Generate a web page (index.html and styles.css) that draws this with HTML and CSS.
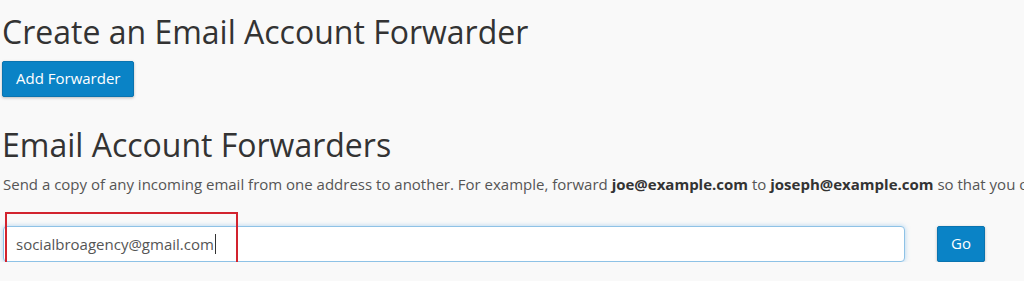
FILE: index.html
```html
<!DOCTYPE html>
<html lang="en">
<head>
  <meta charset="UTF-8" />
  <title>Email Forwarders</title>
  <link rel="stylesheet" href="styles.css">
</head>
<body>

<div class="page">
  <!-- Create section -->
  <h1 class="title">Create an Email Account Forwarder</h1>
  <a href="#" class="btn btn-primary btn-add">Add Forwarder</a>

  <!-- List section -->
  <h2 class="title title-list">Email Account Forwarders</h2>
  <p class="desc">Send a copy of any incoming email from one address to another. For example, forward <b>joe@example.com</b> to <b>joseph@example.com</b> so that you only need to check one account.</p>

  <div class="search-row">
    <div class="search-field">
      <div class="search-input"><span>socialbroagency@gmail.com</span><span class="caret"></span></div>
      <span class="highlight"></span>
    </div>
    <button class="btn btn-primary btn-go">Go</button>
  </div>
</div>

</body>
</html>
```

FILE: styles.css
```css
* {
  margin: 0;
  padding: 0;
  box-sizing: border-box;
}

body {
  font-family: "Open Sans", Arial, sans-serif;
  background-color: #f9f9f9;
  color: #333;
  overflow: hidden;
}

.page {
  padding: 0 0 0 2px;
  width: 1024px;
}

.title {
  font-weight: 400;
  font-size: 32px;
  line-height: 38px;
  color: #333;
  padding-top: 13px;
}

.btn {
  display: inline-block;
  font-family: "Open Sans", Arial, sans-serif;
  font-size: 15px;
  line-height: 21px;
  text-decoration: none;
  border-radius: 2px;
  border: 1px solid #0a74b0;
  cursor: pointer;
}

.btn-primary {
  background-color: #0a83c6;
  color: #fff;
  box-shadow: 0 1px 3px rgba(0,0,0,0.25);
}

.btn-add {
  margin-top: 10px;
  padding: 6px 13px 7px;
}

.title-list {
  padding-top: 29px;
}

.desc {
  font-size: 15px;
  line-height: 20px;
  color: #555;
  white-space: nowrap;
  overflow: hidden;
  margin-top: 10px;
  margin-left: 1px;
}

.desc b {
  color: #333;
}

.search-row {
  display: flex;
  align-items: center;
  gap: 32px;
  margin-top: 32px;
}

.search-field {
  position: relative;
  width: 902px;
  margin-left: 1px;
}

.search-input {
  display: flex;
  align-items: center;
  height: 36px;
  font-size: 15px;
  color: #555;
  padding: 0 12px;
  border: 1px solid #8ec2e6;
  border-radius: 4px;
  background: #fff;
  box-shadow: 0 0 5px rgba(102,175,233,0.5);
}

.caret {
  display: inline-block;
  width: 1px;
  height: 20px;
  margin-left: 1px;
  background: #333;
}

.highlight {
  position: absolute;
  left: 2px;
  top: -14px;
  width: 233px;
  height: 58px;
  border: 2px solid #d2232e;
}

.btn-go {
  padding: 6px 13px 7px;
}
```
